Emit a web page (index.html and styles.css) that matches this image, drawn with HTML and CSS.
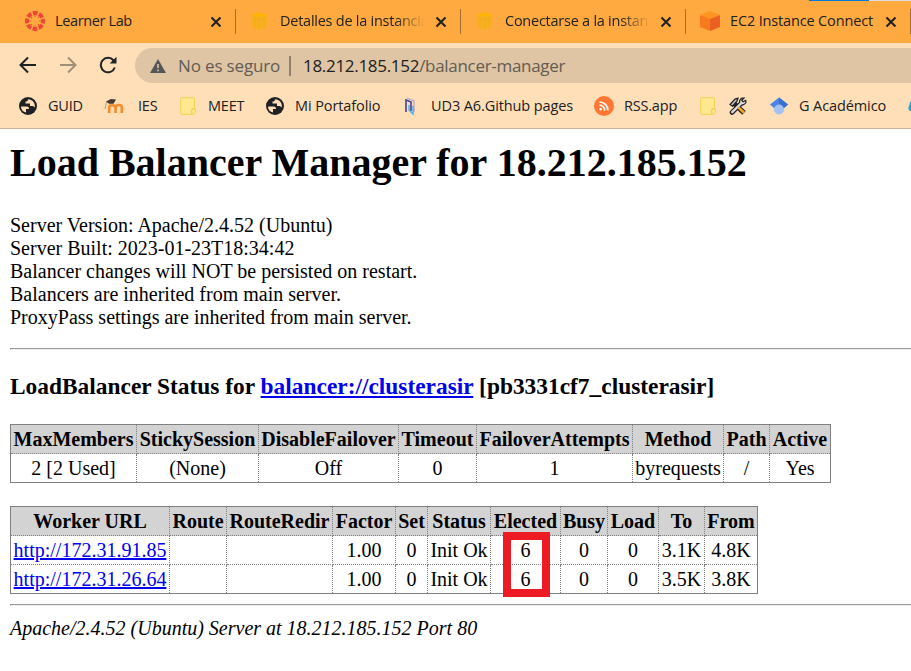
FILE: index.html
```
<!DOCTYPE html>
<html lang="es">
<head>
<meta charset="utf-8">
<title>Balancer Manager</title>
<link rel="stylesheet" href="styles.css">
</head>
<body>
<svg class="defs" aria-hidden="true">
  <symbol id="close" viewBox="0 0 12 12"><path d="M1.500 1.500l9 9M10.500 1.500l-9 9" stroke="#222" stroke-width="2.100"/></symbol>
  <symbol id="cube" viewBox="0 0 20 20"><path d="M1.500 4L9 1.500 17.500 4 16.500 16 9.500 19 2 16z" fill="#f8b01f"/><path d="M1.500 4L9 1.500 17.500 4 9.500 6z" fill="#fdb500"/><path d="M5 8v9M9.500 7v11M14 8v9M3 8h5M11 8h5" stroke="#eda91c" stroke-width=".8" fill="none"/></symbol>
  <symbol id="globe" viewBox="0 0 18 18"><circle cx="9" cy="9" r="9" fill="#202124"/><path d="M2 9.500h5.500c2 0 2.500 1 2.500 2.500H7v3.500C4 15 2 12.500 2 9.500zM9 2.200c0 1.800-.8 2.300-2.500 2.300v2h4.500v2.500h2.500c1 0 1.500 1 2.300 1.500C16.500 6 13.500 2.500 9 2.200z" fill="#ffdfb8"/></symbol>
  <symbol id="note" viewBox="0 0 16 18"><path d="M1.500.7h12q1 0 1 1v10.500h.7v3.500l-2 1.600H1.500q-.8 0-.8-.8V1.500q0-.8.8-.8z" fill="#ffe88f" stroke="#f1d156"/><path d="M14.500 11.700h-1.700q-1 0-1 1v4.300" fill="none" stroke="#efc940"/></symbol>
</svg>

<header class="browser">
  <div class="tabs">
    <div class="tab">
      <svg class="fav" viewBox="0 0 20 20"><circle cx="10" cy="10" r="8" fill="none" stroke="#ef4638" stroke-width="4" stroke-dasharray="4.700 1.583" stroke-dashoffset="2.350"/><g fill="#ef4638"><circle cx="10" cy="5" r=".7"/><circle cx="10" cy="15" r=".7"/><circle cx="5" cy="10" r=".7"/><circle cx="15" cy="10" r=".7"/><circle cx="6.500" cy="6.500" r=".7"/><circle cx="13.500" cy="6.500" r=".7"/><circle cx="6.500" cy="13.500" r=".7"/><circle cx="13.500" cy="13.500" r=".7"/></g></svg>
      <span class="title short">Learner Lab</span><svg class="x"><use href="#close"/></svg>
    </div>
    <div class="tab"><svg class="fav"><use href="#cube"/></svg><span class="title fade">Detalles de la instancia</span><svg class="x"><use href="#close"/></svg></div>
    <div class="tab"><svg class="fav"><use href="#cube"/></svg><span class="title fade">Conectarse a la instancia</span><svg class="x"><use href="#close"/></svg></div>
    <div class="tab">
      <svg class="fav" viewBox="0 0 20 20"><path d="M10 0l10 4-10 4L0 4z" fill="#ff9420"/><path d="M0 4l10 4v12L0 16z" fill="#f97a1c"/><path d="M20 4L10 8v12l10-4z" fill="#eb5f20"/></svg>
      <span class="title ec2">EC2 Instance Connect</span><svg class="x"><use href="#close"/></svg>
    </div>
  </div>
  <div class="toolbar">
    <svg class="nav back" viewBox="0 0 18 18"><path d="M17 9H2M9 1.500L1.500 9 9 16.500" fill="none" stroke="#202124" stroke-width="2"/></svg>
    <svg class="nav forward" viewBox="0 0 18 18"><path d="M1 9h15M9 1.500L16.500 9 9 16.500" fill="none" stroke="#a18e78" stroke-width="2"/></svg>
    <svg class="nav reload" viewBox="0 0 18 18"><path d="M15.800 11.500A7.200 7.200 0 1 1 14.600 4.500" fill="none" stroke="#202124" stroke-width="2"/><path d="M17.500.7V7.500h-6.800z" fill="#202124"/></svg>
    <div class="omnibox">
      <svg class="warn" viewBox="0 0 16 14"><path d="M8 0l8 14H0z" fill="#55565a"/><path d="M8 5v4M8 10.500v1.800" stroke="#dfc5a3" stroke-width="1.600"/></svg>
      <span class="insecure">No es seguro</span><span class="bar"></span><span class="url">18.212.185.152<span class="path">/balancer-manager</span></span>
    </div>
  </div>
  <nav class="bookmarks">
    <div class="bm"><svg class="i18"><use href="#globe"/></svg><span>GUID</span></div>
    <div class="bm"><svg class="moodle" viewBox="0 0 20 16"><path d="M5.200 15V9.500Q5.200 7.200 8 7.200T11.600 9.500V15M11.600 9.500Q11.600 7 14.800 7t3 2.800V15" fill="none" stroke="#f98b26" stroke-width="2.600"/><path d="M2 3.500L7 1l5 .5-2.500 4.300H5z" fill="#453a34"/><path d="M2.500 4l-1.500 7" stroke="#b4835b" stroke-width=".8"/></svg><span>IES</span></div>
    <div class="bm"><svg class="note"><use href="#note"/></svg><span>MEET</span></div>
    <div class="bm"><svg class="i18"><use href="#globe"/></svg><span class="wide">Mi Portafolio</span></div>
    <div class="bm"><svg class="gate" viewBox="0 0 10 18"><path d="M1 15V3l5 2v9" fill="none" stroke="#42429c" stroke-width="1.600"/><path d="M2 1l7 3v11" fill="none" stroke="#b7a5c9" stroke-width="1.300"/><path d="M4 8v5l4 4V9" fill="none" stroke="#55afe2" stroke-width="1.500"/></svg><span class="wide">UD3 A6.Github pages</span></div>
    <div class="bm"><svg class="rss" viewBox="0 0 20 20"><circle cx="10" cy="10" r="10" fill="#ff7733"/><circle cx="6.600" cy="13.200" r="1.300" fill="#fff"/><path d="M5.500 9.200a5.200 5.200 0 0 1 5.200 5.200M5.500 6a8.400 8.400 0 0 1 8.400 8.400" fill="none" stroke="#fff" stroke-width="1.700"/></svg><span>RSS.app</span></div>
    <div class="bm"><svg class="note"><use href="#note"/></svg></div>
    <div class="bm"><svg class="i18" viewBox="0 0 18 18"><path d="M4.500 6L15 15.800" stroke="#222" stroke-width="5"/><path d="M1 7.500l5-5.500 3-.8-1 3-4.500 5z" fill="#bbb" stroke="#222" stroke-width="1.200"/><path d="M3 15.500L12.500 6" stroke="#222" stroke-width="4.600" stroke-linecap="round"/><path d="M13 1Q9.500 3 11 7q3 2.500 6-1.500l-.3-2-2.700 1.300-1.300-1.600L15 1z" fill="#ddd" stroke="#222" stroke-width="1.200"/><path d="M3.200 15.200L12.500 6" stroke="#ddd" stroke-width="2.400" stroke-linecap="round"/><path d="M9.500 10.500l5.500 5.200" stroke="#f3a326" stroke-width="2.800"/></svg></div>
    <div class="bm"><svg class="i18" viewBox="0 0 18 18"><path d="M9 .5l9 7-4.500 4h-9L0 7.500z" fill="#4b83e9"/><path d="M9 .5l9 7-4.500 4L9 7z" fill="#376fd0"/><circle cx="9" cy="12.500" r="5" fill="#a2c1f5"/></svg><span class="wide">G Académico</span></div>
    <div class="bm"><svg class="i18" viewBox="0 0 18 18"><path d="M5 3Q1 5 1.500 8Q-1 12 2 14h12V3z" fill="#12a7df"/></svg></div>
  </nav>
  <div class="edge"></div>
</header>

<main>
  <h1>Load Balancer Manager for 18.212.185.152</h1>
  <dl>
    <dt>Server Version: Apache/2.4.52 (Ubuntu)</dt>
    <dt>Server Built: 2023-01-23T18:34:42</dt>
    <dt>Balancer changes will NOT be persisted on restart.</dt>
    <dt>Balancers are inherited from main server.</dt>
    <dt>ProxyPass settings are inherited from main server.</dt>
  </dl>
  <hr>
  <h3>LoadBalancer Status for <a href="#">balancer://clusterasir</a> [pb3331cf7_clusterasir]</h3>
  <table class="balancer">
    <colgroup><col class="w126"><col class="w122"><col class="w140"><col class="w78"><col class="w156"><col class="w91"><col class="w46"><col class="w61"></colgroup>
    <tr><th>MaxMembers</th><th>StickySession</th><th>DisableFailover</th><th>Timeout</th><th>FailoverAttempts</th><th>Method</th><th>Path</th><th>Active</th></tr>
    <tr><td>2 [2 Used]</td><td>(None)</td><td>Off</td><td>0</td><td>1</td><td>byrequests</td><td>/</td><td>Yes</td></tr>
  </table>
  <div class="workers-wrap">
    <table class="workers">
      <colgroup><col class="w159"><col class="w57"><col class="w106"><col class="w63"><col class="w32"><col class="w63"><col class="w70"><col class="w47"><col class="w51"><col class="w46"><col class="w53"></colgroup>
      <tr><th>Worker URL</th><th>Route</th><th>RouteRedir</th><th>Factor</th><th>Set</th><th>Status</th><th>Elected</th><th>Busy</th><th>Load</th><th>To</th><th>From</th></tr>
      <tr><td><a href="#">http://172.31.91.85</a></td><td></td><td></td><td>1.00</td><td>0</td><td>Init Ok</td><td>6</td><td>0</td><td>0</td><td>3.1K</td><td>4.8K</td></tr>
      <tr><td><a href="#">http://172.31.26.64</a></td><td></td><td></td><td>1.00</td><td>0</td><td>Init Ok</td><td>6</td><td>0</td><td>0</td><td>3.5K</td><td>3.8K</td></tr>
    </table>
    <div class="highlight"></div>
  </div>
  <hr class="end">
  <address>Apache/2.4.52 (Ubuntu) Server at 18.212.185.152 Port 80</address>
</main>
</body>
</html>
```
FILE: styles.css
```
* { box-sizing: border-box; }
body { margin: 0; width: 911px; height: 671px; overflow: hidden; background: #fff; color: #000; font: 20px/23px "Liberation Serif", serif; }
svg { display: block; flex: none; }
.defs { position: absolute; width: 0; height: 0; }

.browser { position: relative; height: 129px; overflow: hidden; background: #ffdfb8; border-bottom: 1px solid #ceb59a; font-family: "Open Sans", sans-serif; color: #202124; white-space: nowrap; }
.tabs { display: flex; height: 43px; padding-left: 11px; background: #ffaa40; }
.tab { display: flex; flex: none; align-items: center; width: 225px; height: 25px; margin-top: 9px; padding: 0 13px 0 14px; border-right: 1px solid #a56e2c; font-size: 14.500px; }
.fav { width: 20px; height: 20px; margin-top: -1px; }
.title { width: 145px; margin: -2px 0 0 10px; overflow: hidden; letter-spacing: -.25px; }
.short { letter-spacing: -.37px; }
.ec2 { letter-spacing: -.15px; }
.fade { -webkit-mask-image: linear-gradient(to right, #000 115px, transparent 145px); mask-image: linear-gradient(to right, #000 115px, transparent 145px); }
.x { width: 12px; height: 12px; margin-left: 11px; }
.edge { position: absolute; top: 0; left: 809px; width: 102px; height: 1px; background: linear-gradient(to right, #0078d7 60px, #ddd 60px); }

.toolbar { display: flex; height: 45px; padding: 5px 0 5px 19px; }
.nav { width: 18px; height: 18px; margin-top: 8px; }
.forward { margin-left: 22px; }
.reload { margin-left: 22px; }
.omnibox { display: flex; flex: 1; align-items: center; margin-left: 18px; padding-left: 15px; background: #dfc5a3; border-radius: 18px 0 0 18px; font-size: 17px; }
.warn { width: 16px; height: 14px; }
.insecure { width: 111px; margin-left: 12px; letter-spacing: -.15px; color: #625c55; }
.bar { width: 2px; height: 20px; background: #8f806f; }
.url { margin-left: 12px; letter-spacing: -.3px; }
.path { color: #625c55; }

.bookmarks { display: grid; grid-template-columns: 85px 76px 86px 139px 189px 106px 29px 41px 138px 20px; height: 35px; padding-left: 19px; font-size: 14.500px; }
.bm { display: flex; align-items: center; }
.bm span { margin: -1px 0 0 11px; letter-spacing: -.2px; }
.bm .wide { letter-spacing: -.1px; }
.i18 { width: 18px; height: 18px; }
.note { width: 16px; height: 18px; }
.moodle { width: 20px; height: 16px; }
.bm .moodle + span { margin-left: 14px; }
.bm .note + span { margin-left: 12px; }
.gate { width: 10px; height: 18px; }
.bm .gate + span { margin-left: 16px; }
.rss { width: 20px; height: 20px; }
.bm .rss + span { margin-left: 10px; }

main { padding: 11px 0 0 10px; }
h1 { margin: 0; font-size: 40px; line-height: 46px; }
dl { margin: 28px 0 0; }
hr { height: 2px; margin: 19px 0 0; border: 1px solid; border-color: #9a9a9a transparent #eee #9a9a9a; border-right: 0; }
h3 { margin: 23px 0 0; font-size: 23.400px; line-height: 27px; }
a { color: #00e; text-decoration: underline; }
table { table-layout: fixed; border-collapse: collapse; border: 1px solid #808080; white-space: nowrap; }
tr { height: 29px; }
th, td { padding: 0; border: 1px dotted #808080; text-align: center; line-height: 23px; }
th { background: #d3d3d3; }
.balancer { width: 821px; margin-top: 24px; }
.workers { width: 748px; }
.workers-wrap { position: relative; margin-top: 23px; }
.highlight { position: absolute; left: 493px; top: 26px; width: 47px; height: 65px; border: 8px solid #ed1c24; }
.w32 { width: 32px; } .w46 { width: 46px; } .w47 { width: 47px; } .w51 { width: 51px; }
.w53 { width: 53px; } .w57 { width: 57px; } .w61 { width: 61px; } .w63 { width: 63px; }
.w70 { width: 70px; } .w78 { width: 78px; } .w91 { width: 91px; } .w106 { width: 106px; }
.w122 { width: 122px; } .w126 { width: 126px; } .w140 { width: 140px; } .w156 { width: 156px; } .w159 { width: 159px; }
.end { margin-top: 10px; }
address { margin-top: 11px; }
```
